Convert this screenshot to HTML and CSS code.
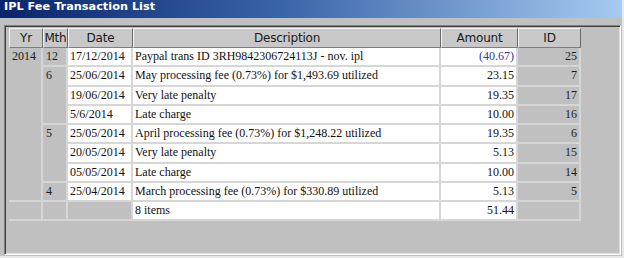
FILE: index.html
```html
<!DOCTYPE html>
<html lang="en">
<head>
    <meta charset="UTF-8">
    <title>IPL Fee Transaction List</title>
    <link rel="stylesheet" href="styles.css">
</head>
<body>
    <div class="window">
        <div class="titlebar">IPL Fee Transaction List</div>
        <div class="panel">
            <table class="grid">
                <colgroup>
                    <col class="c-yr"><col class="c-mth"><col class="c-date">
                    <col class="c-desc"><col class="c-amt"><col class="c-id">
                </colgroup>
                <thead>
                    <tr><th>Yr</th><th>Mth</th><th>Date</th><th>Description</th><th>Amount</th><th>ID</th></tr>
                </thead>
                <tbody>
                    <tr>
                        <td class="grp" rowspan="8">2014</td>
                        <td class="grp">12</td>
                        <td class="cell">17/12/2014</td>
                        <td class="cell">Paypal trans ID 3RH9842306724113J - nov. ipl</td>
                        <td class="cell num neg">(40.67)</td>
                        <td class="grp num">25</td>
                    </tr>
                    <tr>
                        <td class="grp" rowspan="3">6</td>
                        <td class="cell">25/06/2014</td>
                        <td class="cell">May processing fee (0.73%) for $1,493.69 utilized</td>
                        <td class="cell num">23.15</td>
                        <td class="grp num">7</td>
                    </tr>
                    <tr>
                        <td class="cell">19/06/2014</td>
                        <td class="cell">Very late penalty</td>
                        <td class="cell num">19.35</td>
                        <td class="grp num">17</td>
                    </tr>
                    <tr>
                        <td class="cell">5/6/2014</td>
                        <td class="cell">Late charge</td>
                        <td class="cell num">10.00</td>
                        <td class="grp num">16</td>
                    </tr>
                    <tr>
                        <td class="grp" rowspan="3">5</td>
                        <td class="cell">25/05/2014</td>
                        <td class="cell">April processing fee (0.73%) for $1,248.22 utilized</td>
                        <td class="cell num">19.35</td>
                        <td class="grp num">6</td>
                    </tr>
                    <tr>
                        <td class="cell">20/05/2014</td>
                        <td class="cell">Very late penalty</td>
                        <td class="cell num">5.13</td>
                        <td class="grp num">15</td>
                    </tr>
                    <tr>
                        <td class="cell">05/05/2014</td>
                        <td class="cell">Late charge</td>
                        <td class="cell num">10.00</td>
                        <td class="grp num">14</td>
                    </tr>
                    <tr>
                        <td class="grp">4</td>
                        <td class="cell">25/04/2014</td>
                        <td class="cell">March processing fee (0.73%) for $330.89 utilized</td>
                        <td class="cell num">5.13</td>
                        <td class="grp num">5</td>
                    </tr>
                    <tr>
                        <td class="grp"></td>
                        <td class="grp"></td>
                        <td class="grp"></td>
                        <td class="cell">8 items</td>
                        <td class="cell num">51.44</td>
                        <td class="grp"></td>
                    </tr>
                </tbody>
            </table>
        </div>
    </div>
</body>
</html>
```

FILE: styles.css
```css
* {
    margin: 0;
    padding: 0;
    box-sizing: border-box;
}
body {
    background: #c0c0c0;
}
.window {
    width: 624px;
    height: 258px;
    background: #c0c0c0;
    border-right: 2px solid #e8e8e8;
    border-bottom: 2px solid #e8e8e8;
}
.titlebar {
    height: 18px;
    padding-left: 4px;
    line-height: 18px;
    color: #fff;
    font: bold 11.3px "DejaVu Sans", sans-serif;
    background: linear-gradient(to right, #0a246a, #3a64a8 45%, #a6caf0);
}
.panel {
    margin: 7px 0 0 4px;
    width: 617px;
    height: 230px;
    border-top: 1px solid #808080;
    border-left: 1px solid #808080;
    border-right: 1px solid #ffffff;
    border-bottom: 1px solid #ffffff;
    box-shadow: inset 1px 1px 0 #404040, inset -1px -1px 0 #dfdfdf;
    padding: 2px 0 0 4px;
}
.grid {
    table-layout: fixed;
    width: 572px;
    border-collapse: separate;
    border-spacing: 0;
}
.c-yr { width: 34px; }
.c-mth { width: 25px; }
.c-date { width: 65px; }
.c-desc { width: 308px; }
.c-amt { width: 77px; }
.c-id { width: 63px; }

.grid th {
    height: 20px;
    font: normal 12px "DejaVu Sans", sans-serif;
    letter-spacing: -0.2px;
    color: #1a1a1a;
    background: #c8c8c8;
    border-top: 1px solid #f4f4f4;
    border-left: 1px solid #f4f4f4;
    border-right: 1px solid #6a6a6a;
    border-bottom: 1px solid #808080;
    text-align: center;
    vertical-align: middle;
    white-space: nowrap;
}
.grid td {
    height: 19.25px;
    padding: 0 2px 0 3px;
    font: 12px "Liberation Serif", serif;
    color: #111;
    border-right: 2px solid #d6d6d6;
    border-bottom: 2px solid #d6d6d6;
    white-space: nowrap;
    overflow: hidden;
    vertical-align: middle;
}
.grid td.cell {
    background: #fff;
    padding-left: 2px;
}
.grid td.grp {
    background: #c0c0c0;
    color: #1c1c1c;
    vertical-align: top;
    line-height: 17px;
}
.grid td.num {
    text-align: right;
    padding-right: 2px;
}
.grid td.neg {
    color: #2b3a9e;
}
```
